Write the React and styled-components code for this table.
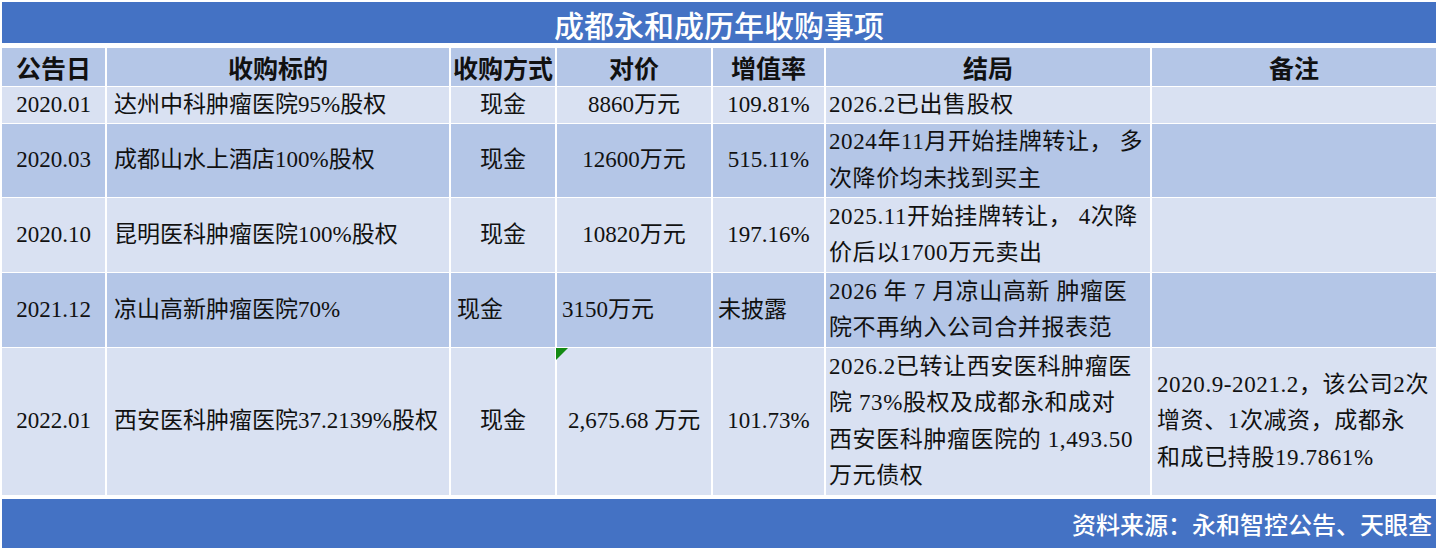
import React from "react";
import styled, { createGlobalStyle } from "styled-components";

const GlobalStyle = createGlobalStyle`
  html, body {
    margin: 0;
    padding: 0;
    background: #fff;
  }
`;

const BLUE = "#4472c4";
const DARK = "#b4c6e7";
const LIGHT = "#d9e1f2";

const Page = styled.div`
  width: 1438px;
  height: 548px;
  box-sizing: border-box;
  padding: 2px 2px 0;
  display: flex;
  flex-direction: column;
  overflow: hidden;
  background: #fff;
`;

const TitleBar = styled.div`
  height: 41px;
  box-sizing: border-box;
  padding-top: 3px;
  background: ${BLUE};
  color: #fff;
  display: flex;
  align-items: center;
  justify-content: center;
  font-family: "Noto Sans CJK SC", sans-serif;
  font-size: 30px;
  font-weight: 500;
  line-height: 36px;
`;

const Table = styled.div`
  margin-top: 5px;
  display: grid;
  grid-template-columns: 103px 342px 104px 154px 111px 324px 284px;
  grid-template-rows: 38px 36px 73px 74px 74px 147px;
  gap: 1px 2px;
  background: #fff;
`;

const HeadCell = styled.div`
  background: ${DARK};
  display: flex;
  align-items: center;
  justify-content: center;
  white-space: nowrap;
  font-family: "Noto Sans CJK SC", sans-serif;
  font-size: 25px;
  font-weight: 700;
  color: #111;
`;

const Cell = styled.div`
  position: relative;
  background: ${(p) => (p.$dark ? DARK : LIGHT)};
  display: flex;
  align-items: center;
  justify-content: ${(p) => (p.$left ? "flex-start" : "center")};
  padding-left: ${(p) => (p.$left ? p.$pad ?? 6 : 0)}px;
  font-family: "Liberation Serif", "Noto Sans CJK SC", serif;
  font-size: 23px;
  letter-spacing: ${(p) => p.$spread ?? 0}px;
  color: #111;
`;

const Text = styled.span`
  white-space: pre;
  line-height: 36.5px;
`;

// little green mark Excel leaves in a cell corner
const Flag = styled.span`
  position: absolute;
  top: 0;
  left: -1px;
  width: 0;
  height: 0;
  border-top: 12px solid #138a13;
  border-right: 12px solid transparent;
`;

const Footer = styled.div`
  margin-top: 4px;
  height: 49px;
  background: ${BLUE};
  color: #fff;
  display: flex;
  align-items: center;
  justify-content: flex-end;
  padding-right: 4px;
  font-family: "Noto Sans CJK SC", sans-serif;
  font-size: 24px;
  font-weight: 500;
`;

const heads = ["公告日", "收购标的", "收购方式", "对价", "增值率", "结局", "备注"];

const rows = [
  {
    date: "2020.01",
    target: "达州中科肿瘤医院95%股权",
    method: "现金",
    price: "8860万元",
    rate: "109.81%",
    result: "2026.2已出售股权",
    note: "",
  },
  {
    date: "2020.03",
    target: "成都山水上酒店100%股权",
    method: "现金",
    price: "12600万元",
    rate: "515.11%",
    result: "2024年11月开始挂牌转让， 多\n次降价均未找到买主",
    note: "",
  },
  {
    date: "2020.10",
    target: "昆明医科肿瘤医院100%股权",
    method: "现金",
    price: "10820万元",
    rate: "197.16%",
    result: "2025.11开始挂牌转让， 4次降\n价后以1700万元卖出",
    note: "",
  },
  {
    date: "2021.12",
    target: "凉山高新肿瘤医院70%",
    method: "现金",
    price: "3150万元",
    rate: "未披露",
    result: "2026 年 7 月凉山高新 肿瘤医\n院不再纳入公司合并报表范",
    note: "",
    left: true,
  },
  {
    date: "2022.01",
    target: "西安医科肿瘤医院37.2139%股权",
    method: "现金",
    price: "2,675.68 万元",
    rate: "101.73%",
    result:
      "2026.2已转让西安医科肿瘤医\n院 73%股权及成都永和成对\n西安医科肿瘤医院的 1,493.50\n万元债权",
    note: "2020.9-2021.2，该公司2次\n增资、1次减资，成都永\n和成已持股19.7861%",
    flag: true,
  },
];

export default function App() {
  return (
    <Page>
      <GlobalStyle />
      <TitleBar>成都永和成历年收购事项</TitleBar>
      <Table>
        {heads.map((h) => (
          <HeadCell key={h}>{h}</HeadCell>
        ))}
        {rows.map((r, i) => {
          const dark = i % 2 === 1;
          return (
            <React.Fragment key={r.date}>
              <Cell $dark={dark}>
                <Text>{r.date}</Text>
              </Cell>
              <Cell $dark={dark} $left $pad={7}>
                <Text>{r.target}</Text>
              </Cell>
              <Cell $dark={dark} $left={r.left} $pad={6}>
                <Text>{r.method}</Text>
              </Cell>
              <Cell $dark={dark} $left={r.left} $pad={5}>
                {r.flag && <Flag />}
                <Text>{r.price}</Text>
              </Cell>
              <Cell $dark={dark} $left={r.left} $pad={5}>
                <Text>{r.rate}</Text>
              </Cell>
              <Cell $dark={dark} $left $pad={3} $spread={0.6}>
                <Text>{r.result}</Text>
              </Cell>
              <Cell $dark={dark} $left $pad={5} $spread={0.6}>
                <Text>{r.note}</Text>
              </Cell>
            </React.Fragment>
          );
        })}
      </Table>
      <Footer>资料来源：永和智控公告、天眼查</Footer>
    </Page>
  );
}
